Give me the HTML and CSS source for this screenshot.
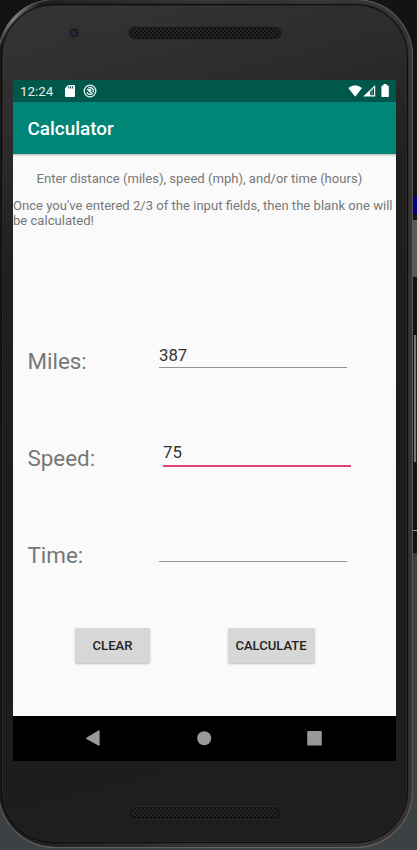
FILE: index.html
```html
<!DOCTYPE html>
<html lang="en">
<head>
<meta charset="utf-8">
<title>Calculator</title>
<link rel="stylesheet" href="styles.css">
</head>
<body>
<div class="desktop-edge"><i class="edge-blue"></i><i class="edge-thumb"></i><i class="edge-scroll"></i><i class="edge-line"></i></div>
<div class="shell"></div>
<div class="face"></div>
<main class="phone">
  <header class="top-bezel">
    <span class="camera"></span>
    <svg class="speaker" width="154" height="14" viewBox="0 0 154 14">
      <defs><pattern id="mesh" width="4" height="4" patternUnits="userSpaceOnUse"><rect width="4" height="4" fill="#262626"/><circle cx="1" cy="1" r=".95" fill="#070707"/><circle cx="3" cy="3" r=".95" fill="#070707"/></pattern></defs>
      <rect x=".5" y=".5" width="153" height="13" rx="6" fill="#191919" stroke="#2d2d2d"/>
      <rect x="3" y="2.5" width="148" height="9" rx="4" fill="url(#mesh)"/>
    </svg>
  </header>
  <section class="screen">
    <div class="status">
      <span class="clock">12:24</span>
      <svg class="sd" width="10" height="12" viewBox="0 0 10 12"><path fill="#fff" fill-rule="evenodd" d="M3.2 0H9Q10 0 10 1V11Q10 12 9 12H1Q0 12 0 11V3.2ZM3.3 1.3V3.5H4.3V1.3ZM5.2 1.3V3.5H6.2V1.3ZM7.1 1.3V3.5H8.1V1.3Z"/></svg>
      <svg class="sync" width="14" height="14" viewBox="0 0 14 14"><circle cx="7" cy="7" r="5.8" fill="none" stroke="#e8f1ef" stroke-width="1.3"/><path d="M3.8 8.2A3.4 3.4 0 0 0 8.5 10.1M5.2 4A3.5 3.5 0 0 1 10.1 8.5" fill="none" stroke="#e8f1ef" stroke-width="1.3"/><path d="M4.2 5L9.6 10.2" stroke="#e8f1ef" stroke-width="1.5"/><circle cx="6.7" cy="6.2" r="1.5" fill="#e8f1ef"/></svg>
      <span class="grow"></span>
      <svg class="signals" width="42" height="14" viewBox="0 0 42 14"><path fill="#fff" d="M.3 4Q7-1.5 14 4L7.2 12.7Z"/><path fill="#fff" fill-rule="evenodd" d="M15.2 12.5L27.2 1V12.5ZM22.2 7.5V11.3H26V3.8Z"/><path fill="#fff" d="M23.3 7L25 5.4V11.3H23.3Z" opacity=".25"/><path fill="#fff" d="M35.5 0H38.7V1.4H40.1Q40.8 1.4 40.8 2.1V12.3Q40.8 13 40.1 13H34.1Q33.4 13 33.4 12.3V2.1Q33.4 1.4 34.1 1.4H35.5Z"/></svg>
    </div>
    <h1 class="app-bar">Calculator</h1>
    <div class="content">
      <p class="intro">Enter distance (miles), speed (mph), and/or time (hours)</p>
      <p class="note">Once you've entered 2/3 of the input fields, then the blank one will be calculated!</p>
      <form class="fields">
        <div class="row"><label for="miles">Miles:</label><input id="miles" value="387"></div>
        <div class="row active"><label for="speed">Speed:</label><input id="speed" value="75"></div>
        <div class="row time"><label for="time">Time:</label><input id="time"></div>
        <div class="actions"><button type="button" class="clear">CLEAR</button><button type="button" class="calculate">CALCULATE</button></div>
      </form>
    </div>
    <nav class="nav">
      <svg width="383" height="45" viewBox="0 0 383 45" fill="#999"><path d="M73.4 21.7L85.3 14.5Q86.6 14 86.6 15.2V28.8Q86.6 30.3 85.3 29.6L73.4 23Q72.5 22.3 73.4 21.7Z"/><circle cx="191.2" cy="22.3" r="7"/><rect x="294.2" y="15" width="14.6" height="14.6" rx=".8"/></svg>
    </nav>
  </section>
  <footer class="bottom-bezel">
    <svg class="speaker" width="154" height="14" viewBox="0 0 154 14">
      <rect x=".5" y=".5" width="153" height="13" rx="6" fill="#151515" stroke="#2a2a2a"/>
      <rect x="3" y="2.5" width="148" height="9" rx="4" fill="url(#mesh)"/>
    </svg>
  </footer>
</main>
</body>
</html>
```
FILE: styles.css
```css
* { box-sizing: border-box; }
html, body { margin: 0; height: 100%; overflow: hidden; }
body {
  position: relative;
  background: linear-gradient(#131313 0 553px, #3c4144 553px);
  font-family: Roboto, "Liberation Sans", sans-serif;
}
/* Window behind the device */
.desktop-edge i { position: absolute; right: 0; }
.edge-blue { top: 197px; width: 4px; height: 17px; background: #00008c; }
.edge-thumb { top: 220px; width: 4px; height: 57px; background: #595959; }
.edge-scroll { top: 335px; width: 3px; height: 127px; background: #777; border-right: 1px solid #222; }
.edge-line { top: 530px; width: 4px; height: 1px; background: #999; }
.shell {
  position: absolute; inset: -1px 4px 2px -2px; border-radius: 57px;
  background: linear-gradient(90deg, #1a1a1a 0, #343434 50%, #383434 100%);
  box-shadow: inset 0 0 1px 1px #5e5c5c, inset 0 -1px 0 #777;
}
.shell::before {
  content: ""; position: absolute; inset: 0; border-radius: 57px;
  background: radial-gradient(circle at 12px 16px, #8a8a8a, transparent 32px);
}
.face {
  position: absolute; inset: 4px 9px 7px 1px; border-radius: 52px;
  background: linear-gradient(165deg, #353537 0, #2c2c2c 14%, #202020 28%, #1c1c1c 55%, #1e1e1f 100%);
  border: 1px solid #0c0c0c;
  box-shadow: inset 0 0 0 1px #272727, 0 0 1px #111;
}
.phone { position: relative; display: grid; grid-template-rows: 80px 681px 89px; width: 383px; margin-left: 13px; }
.top-bezel { display: flex; align-items: flex-start; padding: 25px 0 0 53px; }
.camera {
  width: 15px; height: 16px; margin-right: 47px; border-radius: 50%;
  background: radial-gradient(circle at 53% 50%, #2b2840 0 2px, #1b1b20 3px 4px, #303030 5px 7px, #292929 8px);
}
.top-bezel .speaker { margin-top: 1px; }
.screen { display: flex; flex-direction: column; background: #fafafa; }
.status { display: flex; height: 22px; padding: 0 6.5px 0 7px; background: #00574b; color: #e8f1ef; flex: none; }
.clock { width: 45px; font-size: 13.3px; line-height: 23px; }
.sd { margin-top: 5px; }
.sync { margin: 4px 0 0 8px; }
.grow { flex: 1; }
.signals { margin-top: 4px; }
.app-bar {
  height: 52px; margin: 0; padding-left: 14.5px; flex: none;
  background: #008577; color: #fff; font-size: 18.9px; font-weight: 500; line-height: 54px;
}
.content { flex: 1; color: #777; background: linear-gradient(#bbb, #eee 2px, #fafafa 3px); }
.intro, .note { margin: 0; font-size: 13.08px; line-height: 15.3px; }
.intro { padding: 17px 0 0 23.5px; white-space: nowrap; }
.note { padding-top: 12px; line-height: 15px; }
.fields { padding-top: 107.5px; }
.row { display: flex; height: 97px; padding-left: 14.5px; }
label { width: 131.5px; font-size: 22.4px; line-height: 50px; }
input {
  width: 188px; height: 32px; padding: 7px 0 0; border: 0; border-bottom: 1px solid #939393; outline: 0;
  border-radius: 0; background: none; color: #333; font: 16.8px/24px Roboto, sans-serif;
}
.active label { width: 135.5px; }
.active input { height: 34px; padding-bottom: 1px; border-bottom: 2px solid #e2407a; }
.actions { display: flex; align-items: flex-start; padding: 1px 0 0 62px; }
button {
  height: 35px; padding: 0; border: 0; border-radius: 2px; background: #d6d7d6; color: #222;
  font: 500 13.05px/35px Roboto, sans-serif; box-shadow: 0 1px 2px #bbb;
}
.clear { width: 75px; margin-right: 77.5px; }
.calculate { width: 87px; }
.nav { height: 45px; background: #000; flex: none; }
.nav svg { display: block; }
.bottom-bezel { padding: 44px 0 0 115px; }
```
